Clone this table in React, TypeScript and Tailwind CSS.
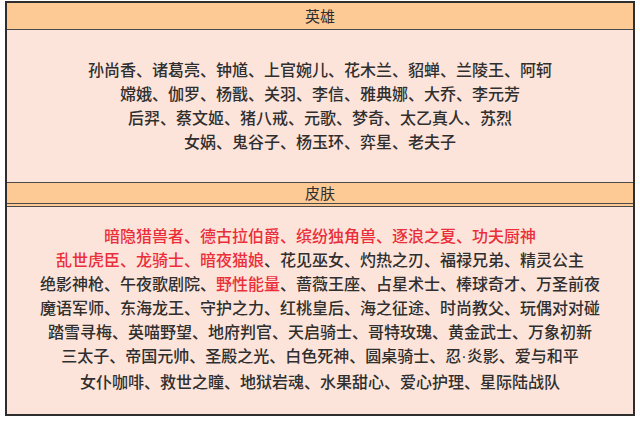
const HEROES = [
  "孙尚香、诸葛亮、钟馗、上官婉儿、花木兰、貂蝉、兰陵王、阿轲",
  "嫦娥、伽罗、杨戬、关羽、李信、雅典娜、大乔、李元芳",
  "后羿、蔡文姬、猪八戒、元歌、梦奇、太乙真人、苏烈",
  "女娲、鬼谷子、杨玉环、弈星、老夫子",
];

// each line is a list of [text, isNew]
const SKINS: [string, boolean][][] = [
  [["暗隐猎兽者、德古拉伯爵、缤纷独角兽、逐浪之夏、功夫厨神", true]],
  [
    ["乱世虎臣、龙骑士、暗夜猫娘", true],
    ["、花见巫女、灼热之刃、福禄兄弟、精灵公主", false],
  ],
  [
    ["绝影神枪、午夜歌剧院、", false],
    ["野性能量", true],
    ["、蔷薇王座、占星术士、棒球奇才、万圣前夜", false],
  ],
  [["魔语军师、东海龙王、守护之力、红桃皇后、海之征途、时尚教父、玩偶对对碰", false]],
  [["踏雪寻梅、英喵野望、地府判官、天启骑士、哥特玫瑰、黄金武士、万象初新", false]],
  [["三太子、帝国元帅、圣殿之光、白色死神、圆桌骑士、忍", false], ["·", false], ["炎影、爱与和平", false]],
  [["女仆咖啡、救世之瞳、地狱岩魂、水果甜心、爱心护理、星际陆战队", false]],
];

const font = { fontFamily: '"Noto Sans CJK SC", "Noto Sans", sans-serif' };

export default function App() {
  return (
    <div className="w-[640px] h-[421px] bg-white pt-px pl-[5px]" style={font}>
      <div className="w-[630px] border-2 border-[#2e2e2e] text-[#2f2f2f]">
        <div className="h-[27px] bg-[#fdc995] flex items-center justify-center text-[15px] border-b border-[#4a4a4a]">
          英雄
        </div>
        <div className="bg-[#fde4da] pt-[27px] pb-[29px] text-center text-[16px] leading-[24px] font-medium">
          {HEROES.map((line) => (
            <p key={line}>{line}</p>
          ))}
        </div>
        <div className="h-[25px] bg-[#fdc995] flex items-center justify-center text-[15px] border-t border-[#4a4a4a] border-b-4 border-b-[#4a4a4a] border-double">
          皮肤
        </div>
        <div className="bg-[#fde4da] pt-[16px] pb-[21px] text-center text-[16px] leading-[24px] font-medium">
          {SKINS.map((line, i) => (
            <p key={i}>
              {line.map(([text, isNew], j) =>
                text === "·" ? (
                  <span key={j} className="font-['Liberation_Sans']">
                    {text}
                  </span>
                ) : (
                  <span key={j} className={isNew ? "text-[#ea2f3a]" : undefined}>
                    {text}
                  </span>
                )
              )}
            </p>
          ))}
        </div>
      </div>
    </div>
  );
}
